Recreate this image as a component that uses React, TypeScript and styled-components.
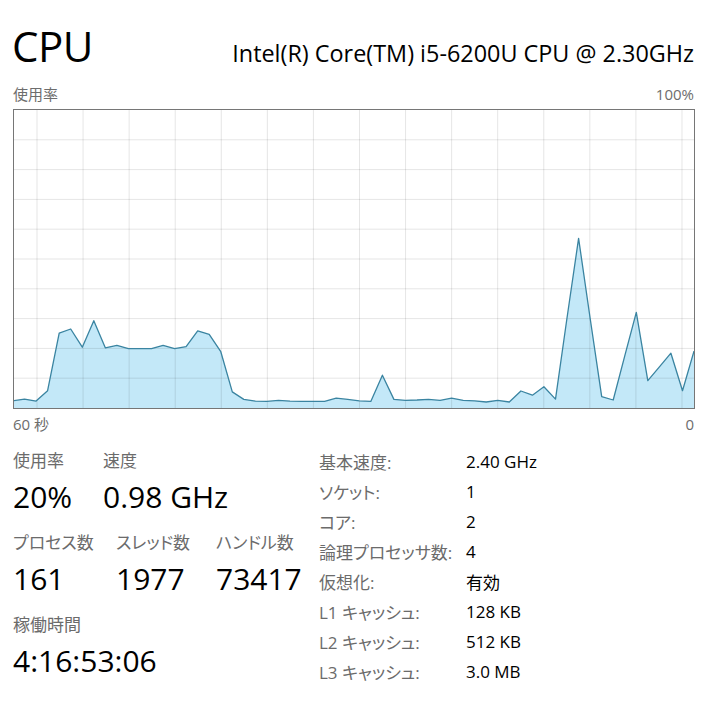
import React from 'react';
import styled, { createGlobalStyle } from 'styled-components';

const GlobalStyle = createGlobalStyle`
  html, body {
    margin: 0;
    padding: 0;
    background: #ffffff;
  }
  body {
    font-family: "Open Sans", "Noto Sans CJK JP", sans-serif;
    font-feature-settings: "palt";
    color: #000000;
  }
`;

const Panel = styled.div`
  width: 716px;
  height: 707px;
  box-sizing: border-box;
  padding: 24px 22px 0 13px;
  overflow: hidden;
`;

const Header = styled.div`
  display: flex;
  justify-content: space-between;
  align-items: baseline;
  height: 44px;
`;

const Title = styled.div`
  font-size: 42px;
  line-height: 44px;
  font-weight: 400;
  margin-left: -1px;
  letter-spacing: -0.5px;
`;

const Processor = styled.div`
  font-size: 23.4px;
  line-height: 30px;
`;

const AxisRow = styled.div<{ $gap: number }>`
  display: flex;
  justify-content: space-between;
  margin-top: ${(p) => p.$gap}px;
  font-size: 15px;
  line-height: 20px;
  color: #6d6d6d;
`;

const ChartFrame = styled.div`
  margin-top: 5px;
  width: 682px;
  height: 300px;
  box-sizing: border-box;
  border: 1px solid #767676;
  svg {
    display: block;
  }
`;

const Stats = styled.div`
  display: flex;
  margin-top: 12px;
`;

const LeftStats = styled.div`
  width: 306px;
  padding-top: 4px;
  display: flex;
  flex-direction: column;
  gap: 10px;
`;

const StatRow = styled.div`
  display: flex;
`;

const StatItem = styled.div<{ $width?: number }>`
  width: ${(p) => (p.$width ? `${p.$width}px` : 'auto')};
  flex-shrink: 0;
`;

const StatLabel = styled.div`
  font-size: 17px;
  line-height: 22px;
  color: #6b6b6b;
`;

const StatValue = styled.div`
  font-size: 30px;
  line-height: 50px;
  color: #000000;
  white-space: nowrap;
`;

const InfoTable = styled.div`
  display: grid;
  grid-template-columns: 147px auto;
  grid-auto-rows: 30px;
  align-items: center;
  font-size: 17px;
`;

const InfoKey = styled.div`
  color: #6b6b6b;
  white-space: nowrap;
`;

const InfoValue = styled.div`
  color: #000000;
  white-space: nowrap;
`;

// usage in %, one sample per second, oldest first
const usage = [
  2.4, 3.0, 2.3, 5.8, 25.1, 26.5, 20.4, 29.3, 20.2, 21.0,
  19.9, 19.9, 19.9, 21.0, 19.9, 20.6, 25.9, 24.7, 18.9, 5.4,
  2.9, 2.3, 2.2, 2.6, 2.3, 2.2, 2.2, 2.2, 3.3, 2.9,
  2.4, 2.2, 11.0, 2.9, 2.6, 2.7, 2.9, 2.6, 3.3, 2.6,
  2.4, 2.0, 2.6, 2.0, 5.7, 4.3, 7.1, 3.0, 30.2, 56.9,
  30.2, 3.8, 2.7, 17.4, 32.1, 9.2, 13.8, 18.4, 5.8, 19.1,
];

const W = 680;
const H = 298;

const UsageChart = () => {
  const step = 681 / (usage.length - 1);
  const pts = usage.map((v, i) => [i * step - 1, H - (v / 100) * H] as const);
  const line = pts.map(([x, y]) => `${x.toFixed(1)},${y.toFixed(1)}`).join(' ');
  const area = `-1,${H} ${line} ${W},${H}`;
  const rows = Array.from({ length: 9 }, (_, k) => (k + 1) * 29.8);
  const cols = Array.from({ length: 15 }, (_, k) => 23 + k * 46.07);

  return (
    <svg width={W} height={H} viewBox={`0 0 ${W} ${H}`}>
      <polygon points={area} fill="#c3e8f8" />
      {rows.map((y) => (
        <line key={`r${y}`} x1={0} x2={W} y1={y} y2={y} stroke="rgba(0,0,0,0.1)" strokeWidth={1} />
      ))}
      {cols.map((x) => (
        <line key={`c${x}`} x1={x} x2={x} y1={0} y2={H} stroke="rgba(0,0,0,0.1)" strokeWidth={1} />
      ))}
      <polyline points={line} fill="none" stroke="#3a84a1" strokeWidth={1.3} strokeLinejoin="round" />
    </svg>
  );
};

const info: [string, string][] = [
  ['基本速度:', '2.40 GHz'],
  ['ソケット:', '1'],
  ['コア:', '2'],
  ['論理プロセッサ数:', '4'],
  ['仮想化:', '有効'],
  ['L1 キャッシュ:', '128 KB'],
  ['L2 キャッシュ:', '512 KB'],
  ['L3 キャッシュ:', '3.0 MB'],
];

export default function App() {
  return (
    <>
      <GlobalStyle />
      <Panel>
        <Header>
          <Title>CPU</Title>
          <Processor>Intel(R) Core(TM) i5-6200U CPU @ 2.30GHz</Processor>
        </Header>
        <AxisRow $gap={16}>
          <span>使用率</span>
          <span>100%</span>
        </AxisRow>
        <ChartFrame>
          <UsageChart />
        </ChartFrame>
        <AxisRow $gap={5}>
          <span>60 秒</span>
          <span>0</span>
        </AxisRow>
        <Stats>
          <LeftStats>
            <StatRow>
              <StatItem $width={90}>
                <StatLabel>使用率</StatLabel>
                <StatValue>20%</StatValue>
              </StatItem>
              <StatItem>
                <StatLabel>速度</StatLabel>
                <StatValue>0.98 GHz</StatValue>
              </StatItem>
            </StatRow>
            <StatRow>
              <StatItem $width={103}>
                <StatLabel>プロセス数</StatLabel>
                <StatValue>161</StatValue>
              </StatItem>
              <StatItem $width={100}>
                <StatLabel>スレッド数</StatLabel>
                <StatValue>1977</StatValue>
              </StatItem>
              <StatItem>
                <StatLabel>ハンドル数</StatLabel>
                <StatValue>73417</StatValue>
              </StatItem>
            </StatRow>
            <StatRow>
              <StatItem>
                <StatLabel>稼働時間</StatLabel>
                <StatValue>4:16:53:06</StatValue>
              </StatItem>
            </StatRow>
          </LeftStats>
          <InfoTable>
            {info.map(([k, v]) => (
              <React.Fragment key={k}>
                <InfoKey>{k}</InfoKey>
                <InfoValue>{v}</InfoValue>
              </React.Fragment>
            ))}
          </InfoTable>
        </Stats>
      </Panel>
    </>
  );
}
